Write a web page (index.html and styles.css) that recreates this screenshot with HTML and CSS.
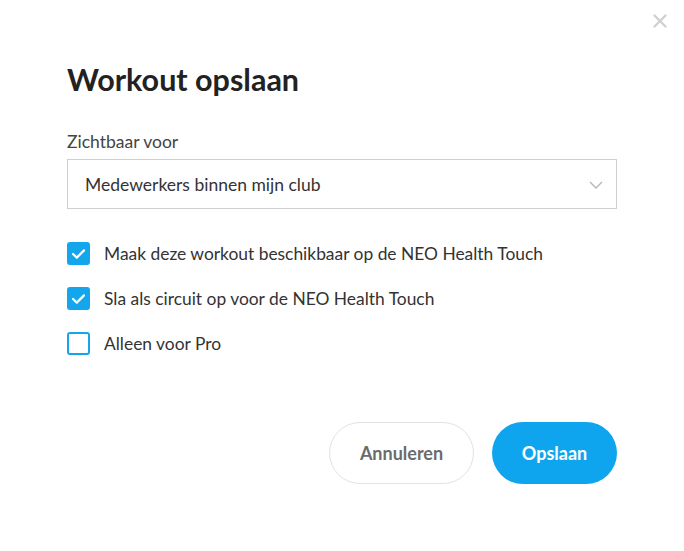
FILE: index.html
```html
<!DOCTYPE html>
<html lang="nl">
<head>
  <meta charset="UTF-8">
  <meta name="viewport" content="width=device-width, initial-scale=1.0">
  <title>Workout opslaan</title>
  <link rel="stylesheet" href="styles.css">
</head>
<body>
  <div class="modal">
    <button class="close" aria-label="Sluiten">
      <svg width="14" height="14" viewBox="0 0 14 14">
        <path d="M1.5 1.5 L12.5 12.5 M12.5 1.5 L1.5 12.5" stroke="#d0d0d0" stroke-width="2.4" stroke-linecap="round"/>
      </svg>
    </button>

    <h1 class="title">Workout opslaan</h1>

    <label class="field-label">Zichtbaar voor</label>
    <div class="select">
      <span>Medewerkers binnen mijn club</span>
      <svg class="chevron" width="14" height="8" viewBox="0 0 14 8">
        <path d="M1 1 L7 7 L13 1" fill="none" stroke="#b5b5b5" stroke-width="1.4"/>
      </svg>
    </div>

    <div class="checks">
      <div class="check-row">
        <span class="box checked">
          <svg width="15" height="12" viewBox="0 0 15 12"><path d="M2 6 L5.8 9.6 L13 2.4" fill="none" stroke="#fff" stroke-width="2.2" stroke-linecap="round" stroke-linejoin="round"/></svg>
        </span>
        <span class="check-label">Maak deze workout beschikbaar op de NEO Health Touch</span>
      </div>
      <div class="check-row">
        <span class="box checked">
          <svg width="15" height="12" viewBox="0 0 15 12"><path d="M2 6 L5.8 9.6 L13 2.4" fill="none" stroke="#fff" stroke-width="2.2" stroke-linecap="round" stroke-linejoin="round"/></svg>
        </span>
        <span class="check-label">Sla als circuit op voor de NEO Health Touch</span>
      </div>
      <div class="check-row">
        <span class="box"></span>
        <span class="check-label">Alleen voor Pro</span>
      </div>
    </div>

    <div class="actions">
      <button class="btn btn-cancel">Annuleren</button>
      <button class="btn btn-save">Opslaan</button>
    </div>
  </div>
</body>
</html>
```

FILE: styles.css
```css
/* General */
body {
  margin: 0;
  background: #fff;
  font-family: 'Lato', sans-serif;
  color: #333;
}

.modal {
  position: relative;
  width: 550px;
  padding: 57px 67px 0;
}

.close {
  position: absolute;
  top: 14px;
  right: 17px;
  background: none;
  border: none;
  padding: 0;
  cursor: pointer;
}

.close svg {
  display: block;
}

.title {
  margin: 0 0 30px;
  font-size: 30.5px;
  font-weight: 700;
  color: #222;
  line-height: 44px;
}

.field-label {
  display: block;
  font-size: 17.5px;
  line-height: 22px;
  color: #444;
  margin-bottom: 6px;
}

.select {
  height: 48px;
  border: 1px solid #cfcfcf;
  display: flex;
  align-items: center;
  justify-content: space-between;
  padding: 0 13px 0 17px;
  font-size: 17.5px;
  color: #333;
}

.chevron {
  margin-top: 1px;
}

/* Checkboxes */
.checks {
  margin-top: 33px;
  display: flex;
  flex-direction: column;
  gap: 22px;
}

.check-row {
  display: flex;
  align-items: center;
  gap: 14px;
  height: 23px;
}

.box {
  width: 19px;
  height: 19px;
  border: 2px solid #14a6ec;
  border-radius: 3px;
  display: flex;
  align-items: center;
  justify-content: center;
  background: #fff;
}

.box.checked {
  background: #14a6ec;
}

.check-label {
  font-size: 17.4px;
  color: #333;
}

/* Buttons */
.actions {
  margin-top: 67px;
  display: flex;
  justify-content: flex-end;
  gap: 18px;
}

.btn {
  height: 62px;
  border-radius: 31px;
  font-family: 'Lato', sans-serif;
  font-size: 18px;
  font-weight: 700;
  cursor: pointer;
}

.btn-cancel {
  width: 145px;
  background: #fff;
  border: 1px solid #e2e2e2;
  color: #6b6b6b;
}

.btn-save {
  width: 125px;
  background: #0ea5ee;
  border: none;
  color: #fff;
}
```
